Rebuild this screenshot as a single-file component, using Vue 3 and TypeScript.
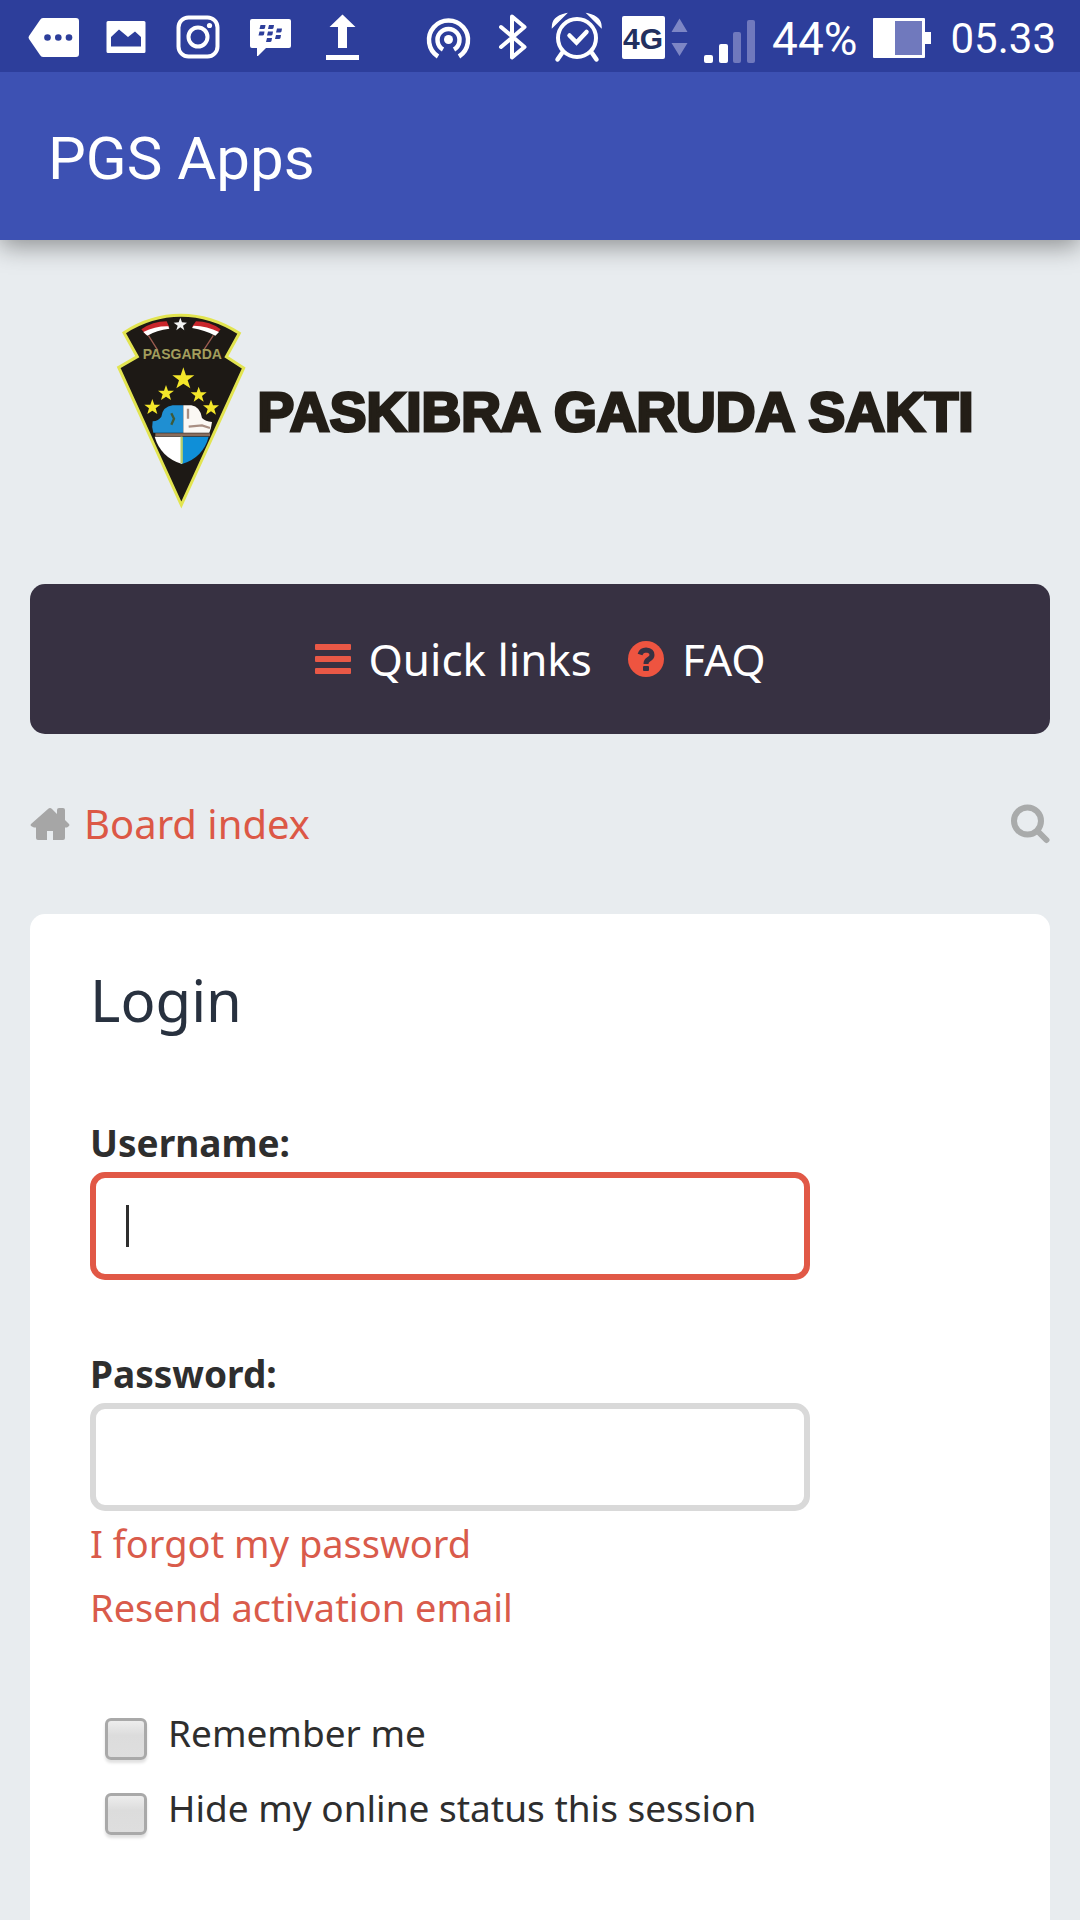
<script setup lang="ts">
import { ref } from 'vue'

interface Star {
  x: number
  y: number
  r: number
}

const username = ref('')
const password = ref('')
const remember = ref(false)
const hideOnline = ref(false)

const stars: Star[] = [
  { x: 312, y: 267, r: 35 },
  { x: 260, y: 310, r: 25 },
  { x: 358, y: 315, r: 25 },
  { x: 219, y: 352, r: 25 },
  { x: 395, y: 354, r: 25 },
]

function starPoints({ x, y, r }: Star): string {
  return Array.from({ length: 10 }, (_, i) => {
    const radius = i % 2 ? r * 0.4 : r
    const angle = (Math.PI / 5) * i - Math.PI / 2
    return `${Math.round(x + radius * Math.cos(angle))},${Math.round(y + radius * Math.sin(angle))}`
  }).join(' ')
}
</script>

<template>
  <div class="page">
    <div class="status">
      <div class="status-left">
        <svg width="56" height="72" viewBox="26 0 56 72">
          <path d="M43 18H76a3 3 0 0 1 3 3V54a3 3 0 0 1-3 3H43q-2 0-3-2L29 39q-1-1.500 0-3L40 20q1-2 3-2z" fill="#fff" />
          <g fill="#2d3e9b"><circle cx="47.500" cy="37.500" r="3.300" /><circle cx="58.300" cy="37.500" r="3.300" /><circle cx="69" cy="37.500" r="3.300" /></g>
        </svg>
        <svg width="56" height="72" viewBox="98 0 56 72">
          <path fill="#fff" fill-rule="evenodd" d="M108 21h36a1.500 1.500 0 0 1 1.500 1.500v29a1.500 1.500 0 0 1-1.500 1.500h-36a1.500 1.500 0 0 1-1.500-1.500v-29a1.500 1.500 0 0 1 1.500-1.500zM111 46.500h30V37l-6-5.500-7 5.500-9-7.500-8 7.500z" />
        </svg>
        <svg width="56" height="72" viewBox="170 0 56 72" fill="none" stroke="#fff">
          <rect x="178.500" y="17.500" width="39" height="39" rx="10" stroke-width="4" />
          <circle cx="198" cy="37" r="9.500" stroke-width="4" />
          <circle cx="209.500" cy="25.500" r="2.600" fill="#fff" stroke="none" />
        </svg>
        <svg width="56" height="72" viewBox="242 0 56 72">
          <path fill="#fff" d="M252 19h37a2 2 0 0 1 2 2v25a2 2 0 0 1-2 2H266l-8 8h-1v-8h-5a2 2 0 0 1-2-2V21a2 2 0 0 1 2-2z" />
          <g fill="#2d3e9b">
            <path d="M260.500 25h5l-.5 3q-.3 1-1.500 1h-4zM269 25h5l-.5 3q-.3 1-1.500 1h-4zM259.500 31.500h5l-.5 3q-.3 1-1.500 1h-4zM268 31.500h5l-.5 3q-.3 1-1.500 1h-4zM277 28.500h5l-.5 3q-.3 1-1.500 1h-4zM276 35h5l-.5 3q-.3 1-1.500 1h-4zM267 38h5l-.5 3q-.3 1-1.500 1h-4z" />
          </g>
        </svg>
        <svg width="56" height="72" viewBox="314 0 56 72" fill="#fff">
          <path d="M342.500 14.500L355.500 27H347V48H338V27h-8.500zM326 55h33v5h-33z" />
        </svg>
      </div>
      <div class="status-right">
        <svg width="56" height="72" viewBox="424 0 56 72" fill="none" stroke="#fff" stroke-width="4.500">
          <path d="M440 56.500A19.500 19.500 0 1 1 461 56.500" />
          <path d="M445 49.500A11 11 0 1 1 456 49.500" />
          <circle cx="450.500" cy="39.500" r="4.500" fill="#fff" stroke="none" />
        </svg>
        <svg width="56" height="72" viewBox="488 0 56 72" fill="none" stroke="#fff" stroke-width="4" stroke-linejoin="round" stroke-linecap="round">
          <path d="M503 27L526.500 47 514 57.500V16.500L526.500 27 503 47" />
        </svg>
        <svg width="56" height="72" viewBox="552 0 56 72" fill="none" stroke="#fff" stroke-width="4">
          <circle cx="579" cy="38" r="19" />
          <path d="M571.500 35.500l7 7 10-10.500M564 53l-4.500 6.500M594 53l4.500 6.500" stroke-width="4.500" stroke-linecap="round" />
          <path d="M554.500 27q0-10 13-13zM603 27q0-10-13-13z" fill="#fff" stroke-width="1.500" />
        </svg>
        <svg width="80" height="72" viewBox="616 0 80 72">
          <rect x="624" y="16" width="43" height="43" rx="2" fill="#fff" />
          <text x="625" y="49" class="net">4G</text>
          <path d="M681.500 18.500L689.500 32h-16zM681.500 56L689.500 43h-16z" fill="#7d86c5" />
        </svg>
        <svg width="56" height="72" viewBox="704 0 56 72">
          <rect x="706" y="55" width="9" height="8" rx="2" fill="#fff" />
          <rect x="721" y="44" width="9" height="19" rx="2" fill="#fff" />
          <rect x="735" y="32" width="8" height="31" rx="2" fill="#7079bd" />
          <rect x="749" y="20" width="8" height="43" rx="2" fill="#7079bd" />
        </svg>
        <span class="status-text charge">44%</span>
        <svg width="64" height="72" viewBox="868 0 64 72">
          <path fill="#fff" d="M873 18h50a1 1 0 0 1 1 1v13h6v12h-6v13a1 1 0 0 1-1 1h-50a1 1 0 0 1-1-1V19a1 1 0 0 1 1-1z" />
          <rect x="894" y="21" width="27" height="34" fill="#7079bd" />
        </svg>
        <time class="status-text clock">05.33</time>
      </div>
    </div>

    <header class="appbar"><span>PGS Apps</span></header>

    <main class="content">
      <a class="brand" href="#">
        <svg width="130" height="200" viewBox="110 60 390 600" aria-hidden="true">
          <path d="M134 128Q215 76 305 76T480 130L441 200 493 234 306 645 118 232 174 200z" fill="#1d1915" stroke="#e2e450" stroke-width="9" />
          <path d="M186 118Q220 94 262 94L270 112Q230 116 200 134z" fill="#c9252b" />
          <path d="M192 126Q228 108 267 109L270 116Q232 120 204 137z" fill="#fff" />
          <path d="M424 118Q392 94 350 94L338 110Q380 116 410 134z" fill="#c9252b" />
          <path d="M419 126Q384 108 343 107L338 114Q376 120 408 137z" fill="#fff" />
          <path d="M207 136L236 182M402 136L372 182" stroke="#9a5b50" stroke-width="4" />
          <polygon :points="starPoints({ x: 303, y: 104, r: 21 })" fill="#f4f4f4" />
          <text x="309" y="208" class="emblem-text">PASGARDA</text>
          <polygon v-for="s in stars" :key="s.x" :points="starPoints(s)" fill="#f3e62a" />
          <path d="M312 346H280Q250 350 246 380 238 392 220 394 216 412 222 428H312z" fill="#1f8fd2" />
          <path d="M312 346H336Q362 350 368 384 378 394 398 396 396 414 390 428H312z" fill="#fbf8f4" />
          <path d="M326 356v30M328 410l40-4 24 8" stroke="#a98f83" stroke-width="7" fill="none" />
          <path d="M276 370l8 16-8 18" stroke="#3d5a3a" stroke-width="7" fill="none" />
          <path d="M226 440H308V522Q244 502 226 440z" fill="#fff" />
          <path d="M308 440H388Q372 502 308 522z" fill="#0f8fd8" />
          <path d="M228 434H392" stroke="#8a6d5c" stroke-width="9" />
          <path d="M307 440V520" stroke="#b9cf6a" stroke-width="7" />
        </svg>
        <span class="brand-name">PASKIBRA GARUDA SAKTI</span>
      </a>

      <nav class="nav">
        <button type="button" class="nav-item">
          <svg width="36" height="36" viewBox="0 0 36 36" fill="#e95846">
            <rect y="3" width="36" height="6" rx="1" /><rect y="15" width="36" height="6" rx="1" /><rect y="27" width="36" height="6" rx="1" />
          </svg>
          <span>Quick links</span>
        </button>
        <a class="nav-item" href="#">
          <svg width="36" height="36" viewBox="0 0 36 36">
            <circle cx="18" cy="18" r="18" fill="#ee5440" />
            <path d="M12 13.500Q13.500 9 18 9 24 9.500 24 14 24 16.500 20.500 18.500 18 20 18 23" fill="none" stroke="#373142" stroke-width="5" />
            <rect x="15" y="25" width="6" height="5" rx="1" fill="#373142" />
          </svg>
          <span>FAQ</span>
        </a>
      </nav>

      <div class="crumbs">
        <a class="crumb" href="#">
          <svg width="40" height="34" viewBox="0 0 40 34" fill="#a6a6a6">
            <path d="M18 2Q20 0 22 2L27 7V3Q27 1 29 1H33Q35 1 35 3V13L39 17Q40 18 39 19L37 20.500H35V31Q35 33 33 33H23V24H17V33H8Q6 33 6 31V20.500H4L1 19Q0 18 1 17z" />
          </svg>
          <span>Board index</span>
        </a>
        <button type="button" class="search" aria-label="Search">
          <svg width="40" height="40" viewBox="0 0 40 40" fill="none" stroke="#a9abab">
            <circle cx="17.500" cy="17" r="13.500" stroke-width="6" />
            <path d="M28 27.500L36.500 36" stroke-width="6" stroke-linecap="round" />
          </svg>
        </button>
      </div>

      <form class="card" @submit.prevent>
        <h2>Login</h2>
        <div class="field">
          <label for="username">Username:</label>
          <div class="box">
            <input id="username" v-model="username" class="active" type="text" />
            <i v-if="!username" class="caret"></i>
          </div>
        </div>
        <div class="field">
          <label for="password">Password:</label>
          <div class="box"><input id="password" v-model="password" type="password" /></div>
          <a class="help" href="#">I forgot my password</a>
          <a class="help" href="#">Resend activation email</a>
        </div>
        <div class="options">
          <label class="option"><input v-model="remember" type="checkbox" /><span>Remember me</span></label>
          <label class="option"><input v-model="hideOnline" type="checkbox" /><span>Hide my online status this session</span></label>
        </div>
      </form>
    </main>
  </div>
</template>

<style>
body {
  margin: 0;
  background: #e8ecef;
}
</style>

<style scoped>
.page {
  display: flex;
  flex-direction: column;
  min-height: 100vh;
  overflow-x: hidden;
  background: #e8ecef;
  font-family: "Noto Sans", "Open Sans", sans-serif;
  color: #2e2e2e;
}
svg {
  display: block;
  flex: none;
}
a {
  text-decoration: none;
}
button {
  padding: 0;
  border: 0;
  background: none;
  font: inherit;
}
.status {
  position: relative;
  z-index: 1;
  display: flex;
  justify-content: space-between;
  height: 72px;
  padding: 0 24px 0 26px;
  background: #2d3e9b;
}
.status-left {
  display: flex;
  gap: 16px;
}
.status-right {
  display: flex;
  gap: 8px;
}
.status-text {
  font-family: Roboto, sans-serif;
  line-height: 78px;
  color: #fff;
}
.charge {
  padding: 0 3px 0 6px;
  font-size: 46px;
}
.clock {
  padding-left: 10px;
  font-size: 42px;
}
.net {
  font: bold 30px "Liberation Sans", sans-serif;
  fill: #22305f;
}
.appbar {
  position: relative;
  display: flex;
  align-items: center;
  box-sizing: border-box;
  height: 168px;
  padding: 4px 48px 0;
  background: #3d51b3;
  box-shadow: 0 6px 24px rgba(0, 0, 0, 0.4);
  font-family: Roboto, sans-serif;
  font-size: 60px;
  color: #fff;
}
.content {
  display: flex;
  flex: 1;
  flex-direction: column;
  padding: 0 30px;
}
.brand {
  display: flex;
  align-items: center;
  justify-content: center;
  gap: 11px;
  padding: 70px 0 74px 10px;
}
.brand-name {
  padding-top: 4px;
  font: bold 55px "Liberation Sans", sans-serif;
  white-space: nowrap;
  color: #231e17;
  -webkit-text-stroke: 3px #231e17;
}
.emblem-text {
  font: bold 42px "Liberation Sans", sans-serif;
  text-anchor: middle;
  fill: #a39e5c;
}
.nav {
  display: flex;
  align-items: center;
  justify-content: center;
  gap: 36px;
  height: 150px;
  border-radius: 15px;
  background: #373142;
}
.nav-item {
  display: flex;
  align-items: center;
  gap: 18px;
  font-size: 44px;
  line-height: 60px;
  color: #fff;
}
.crumbs {
  display: flex;
  align-items: center;
  justify-content: space-between;
  height: 60px;
  margin: 60px 0;
}
.crumb {
  display: flex;
  align-items: center;
  gap: 14px;
  font-size: 40px;
  line-height: 60px;
  color: #dc5846;
}
.card {
  flex: 1;
  padding: 51px 60px 60px;
  border-radius: 15px 15px 0 0;
  background: #fff;
}
h2 {
  margin: 0 0 81px;
  font-size: 58px;
  font-weight: 400;
  line-height: 70px;
  color: #28313f;
}
.field {
  display: flex;
  flex-direction: column;
  align-items: flex-start;
}
.field + .field {
  margin-top: 67px;
}
.field label {
  margin-bottom: 2px;
  font-size: 37px;
  font-weight: 700;
  line-height: 54px;
}
.box {
  position: relative;
  width: 80%;
}
.box input {
  display: block;
  box-sizing: border-box;
  width: 100%;
  height: 108px;
  padding: 0 30px;
  border: 6px solid #d9d9d9;
  border-radius: 15px;
  outline: none;
  background: #fff;
  font: inherit;
  font-size: 37px;
}
.box input.active {
  border-color: #e15846;
}
.caret {
  position: absolute;
  top: 33px;
  left: 36px;
  width: 3px;
  height: 42px;
  background: #2e2e2e;
}
.help {
  font-size: 38px;
  line-height: 64px;
  color: #d95b4b;
}
.options {
  margin-top: 56px;
  padding-left: 15px;
}
.option {
  display: flex;
  align-items: flex-start;
  gap: 21px;
  font-size: 37px;
  line-height: 75px;
}
.option input {
  appearance: none;
  flex: none;
  box-sizing: border-box;
  width: 42px;
  height: 42px;
  margin: 23px 0 0;
  border: 3px solid #a9a9a9;
  border-radius: 6px;
  background: linear-gradient(#ededed, #dcdcdc 40%, #dedede);
  box-shadow: 0 3px 3px rgba(0, 0, 0, 0.12);
}
.option input:checked {
  background: #e15846;
}
</style>
